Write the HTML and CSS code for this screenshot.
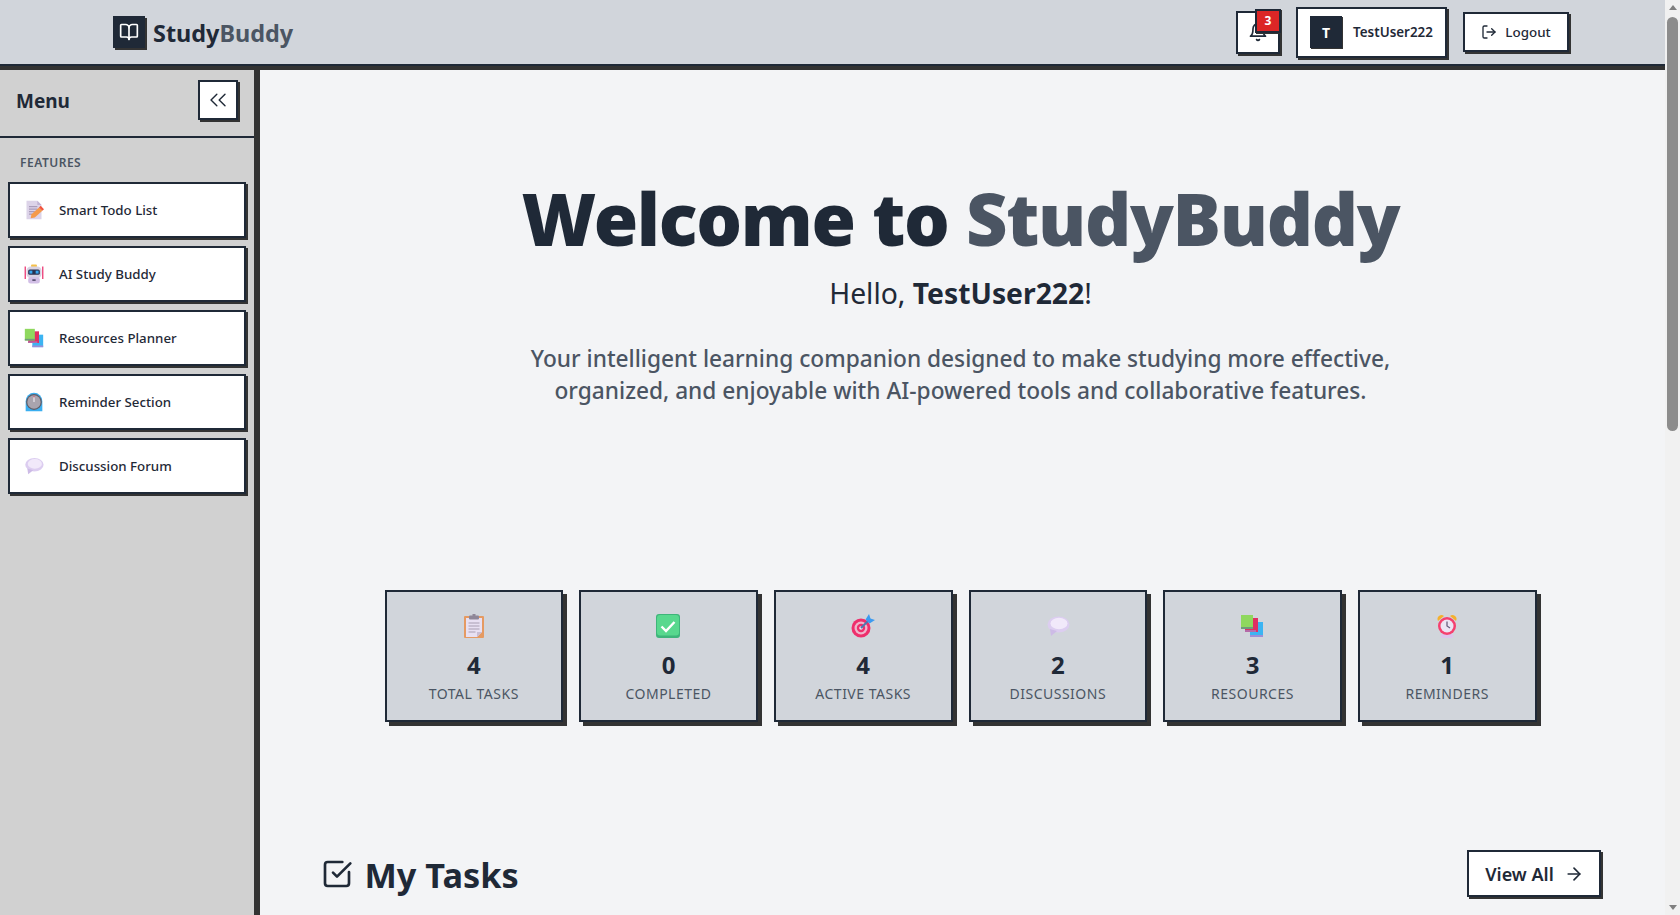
FILE: index.html
```html
<!DOCTYPE html>
<html lang="en">
  <head>
    <meta charset="UTF-8" />
    <meta name="viewport" content="width=device-width, initial-scale=1.0" />
    <title>StudyBuddy</title>
    <link rel="stylesheet" href="styles.css">
  </head>

  <body>
    <!-- emoji style pictures, reused in the sidebar and the stat cards -->
    <svg class="defs" width="0" height="0">
      <defs>
        <symbol id="e-memo" viewBox="0 0 24 24">
          <path d="M3 1h13l5 5v17H3z" fill="#dcd3e8"/>
          <path d="M16 1l5 5h-5z" fill="#bfb2d2"/>
          <path d="M6 8h10M6 11h10M6 14h7M6 17h4" stroke="#a99cba" stroke-width="1.4"/>
          <path d="M8 22l1-5 9-8 4 4-9 8z" fill="#f59a4a"/>
          <path d="M18 9l2-2 4 4-2 2z" fill="#f2543d"/>
        </symbol>
        <symbol id="e-robot" viewBox="0 0 24 24">
          <path d="M1.500 3v15M22.500 3v15" stroke="#ec3f78" stroke-width="1.6"/>
          <rect x="8.500" y="0.500" width="7" height="3.500" rx="1" fill="#f5c04a"/>
          <rect x="3" y="3" width="18" height="14" rx="5" fill="#d9d3e4"/>
          <rect x="5" y="6.500" width="14" height="6.500" rx="2" fill="#2b3350"/>
          <rect x="6.500" y="8" width="3.500" height="3.500" fill="#38a7f0"/>
          <rect x="14" y="8" width="3.500" height="3.500" fill="#38a7f0"/>
          <rect x="5" y="16" width="14" height="7.500" rx="3" fill="#d2bfe6"/>
          <rect x="10" y="18.500" width="4" height="1.600" fill="#3a3550"/>
        </symbol>
        <symbol id="e-books" viewBox="0 0 24 24">
          <rect x="10" y="8" width="13" height="15" fill="#3cb4f2"/>
          <rect x="10" y="21" width="13" height="2" fill="#9a8fd8"/>
          <rect x="5" y="4" width="13" height="14" fill="#e02f62"/>
          <rect x="5" y="16" width="11" height="2" fill="#b56aa8"/>
          <rect x="1" y="1" width="12" height="14" fill="#8fd85e"/>
          <rect x="1" y="13" width="12" height="2" fill="#6f9c7a"/>
        </symbol>
        <symbol id="e-clock" viewBox="0 0 24 24">
          <path d="M2 23V11a10 10 0 0 1 20 0v12z" fill="#3aaef0"/>
          <circle cx="12" cy="12" r="9.500" fill="#5f5d68"/>
          <circle cx="12" cy="12" r="8" fill="#a9a4ae"/>
          <path d="M12 6v6" stroke="#e9e6ee" stroke-width="1.500"/>
          <path d="M12 4.500v2" stroke="#e0526a" stroke-width="1.200"/>
        </symbol>
        <symbol id="e-speech" viewBox="0 0 24 24">
          <ellipse cx="12.500" cy="10.500" rx="11" ry="8" fill="#dccdf0"/>
          <ellipse cx="13" cy="9.500" rx="8.500" ry="5.800" fill="#f1e9fa"/>
          <path d="M4 15l1 7 6-5z" fill="#cdbbe6"/>
        </symbol>
        <symbol id="e-clipboard" viewBox="0 0 24 24">
          <rect x="2" y="2" width="20" height="22" rx="1" fill="#e59a62"/>
          <path d="M4 4h16v14l-5 5H4z" fill="#e8e0f2"/>
          <path d="M15 23l5-5h-5z" fill="#c9bdd4"/>
          <rect x="7" y="1.500" width="10" height="4" rx="1" fill="#8f8798"/>
          <rect x="10.500" y="0" width="3" height="2.500" fill="#8f8798"/>
          <path d="M6.500 9h11M6.500 12h11M6.500 15h11M6.500 18h7" stroke="#a89eb2" stroke-width="1.100"/>
        </symbol>
        <symbol id="e-check" viewBox="0 0 24 24">
          <rect x="0" y="0" width="24" height="24" rx="3" fill="#3eb57a"/>
          <rect x="1" y="1" width="22" height="20.500" rx="3" fill="#58d88e"/>
          <path d="M5.500 12.500l4.500 4.500 8.500-9" fill="none" stroke="#fff" stroke-width="2.400"/>
        </symbol>
        <symbol id="e-target" viewBox="0 0 24 24">
          <circle cx="10" cy="14" r="9.500" fill="#ee2f6c"/>
          <circle cx="10" cy="14" r="6.500" fill="#efb6cc"/>
          <circle cx="10" cy="14" r="4.200" fill="#ee2f6c"/>
          <circle cx="10" cy="14" r="1.800" fill="#efe6f6"/>
          <path d="M10 14l8-8" stroke="#4a7ab0" stroke-width="2"/>
          <path d="M14.500 5.500L18 0l1.500 4.500L24 6l-5.500 3.500z" fill="#3d9bf0"/>
        </symbol>
        <symbol id="e-alarm" viewBox="0 0 24 24">
          <path d="M3 7a4 4 0 0 1 6-5zM21 7a4 4 0 0 0-6-5z" fill="#f5b02e"/>
          <rect x="6" y="20" width="12" height="4" rx="1" fill="#dcc4ec"/>
          <circle cx="12" cy="12" r="9" fill="#f5406f"/>
          <circle cx="12" cy="12" r="6.500" fill="#ece4f4"/>
          <path d="M12 7.500V12l3 2" fill="none" stroke="#6a5f80" stroke-width="1.300"/>
        </symbol>
      </defs>
    </svg>

    <div class="page">
      <div class="app">
        <header class="topbar">
          <div class="brand">
            <span class="brand-mark">
              <svg class="stroke-icon" width="20" height="20" viewBox="0 0 24 24">
                <path d="M12 7v14"/>
                <path d="M3 18a1 1 0 0 1-1-1V4a1 1 0 0 1 1-1h5a4 4 0 0 1 4 4 4 4 0 0 1 4-4h5a1 1 0 0 1 1 1v13a1 1 0 0 1-1 1h-6a3 3 0 0 0-3 3 3 3 0 0 0-3-3z"/>
              </svg>
            </span>
            <span class="brand-name">Study<span class="muted">Buddy</span></span>
          </div>

          <div class="topbar-actions">
            <button class="btn bell">
              <svg class="stroke-icon" width="20" height="20" viewBox="0 0 24 24">
                <path d="M6 8a6 6 0 0 1 12 0c0 7 3 9 3 9H3s3-2 3-9"/>
                <path d="M10.300 21a1.940 1.940 0 0 0 3.400 0"/>
              </svg>
              <span class="badge">3</span>
            </button>
            <button class="btn user">
              <span class="avatar">T</span>
              <span class="user-name">TestUser222</span>
            </button>
            <button class="btn logout">
              <svg class="stroke-icon" width="16" height="16" viewBox="0 0 24 24">
                <path d="M9 21H5a2 2 0 0 1-2-2V5a2 2 0 0 1 2-2h4"/>
                <path d="M16 17l5-5-5-5"/>
                <path d="M21 12H9"/>
              </svg>
              Logout
            </button>
          </div>
        </header>

        <div class="body-row">
          <aside class="sidebar">
            <div class="sidebar-head">
              <h2>Menu</h2>
              <button class="btn collapse">
                <svg class="stroke-icon" width="28" height="28" viewBox="0 0 24 24">
                  <path d="M11 17l-5-5 5-5"/>
                  <path d="M18 17l-5-5 5-5"/>
                </svg>
              </button>
            </div>
            <p class="nav-title">FEATURES</p>
            <nav class="nav">
              <a class="nav-item"><svg class="emoji"><use href="#e-memo"/></svg>Smart Todo List</a>
              <a class="nav-item"><svg class="emoji"><use href="#e-robot"/></svg>AI Study Buddy</a>
              <a class="nav-item"><svg class="emoji"><use href="#e-books"/></svg>Resources Planner</a>
              <a class="nav-item"><svg class="emoji"><use href="#e-clock"/></svg>Reminder Section</a>
              <a class="nav-item"><svg class="emoji"><use href="#e-speech"/></svg>Discussion Forum</a>
            </nav>
          </aside>

          <main class="content">
            <section class="hero">
              <h1>Welcome to <span class="muted">StudyBuddy</span></h1>
              <p class="hello">Hello, <b>TestUser222</b>!</p>
              <p class="intro">Your intelligent learning companion designed to make studying more effective, organized, and enjoyable with AI-powered tools and collaborative features.</p>
            </section>

            <section class="stats">
              <div class="stat"><svg class="stat-icon"><use href="#e-clipboard"/></svg><b>4</b><span>Total Tasks</span></div>
              <div class="stat"><svg class="stat-icon"><use href="#e-check"/></svg><b>0</b><span>Completed</span></div>
              <div class="stat"><svg class="stat-icon"><use href="#e-target"/></svg><b>4</b><span>Active Tasks</span></div>
              <div class="stat"><svg class="stat-icon"><use href="#e-speech"/></svg><b>2</b><span>Discussions</span></div>
              <div class="stat"><svg class="stat-icon"><use href="#e-books"/></svg><b>3</b><span>Resources</span></div>
              <div class="stat"><svg class="stat-icon"><use href="#e-alarm"/></svg><b>1</b><span>Reminders</span></div>
            </section>

            <section class="tasks-head">
              <h2>
                <svg class="stroke-icon" width="32" height="32" viewBox="0 0 24 24">
                  <path d="M21 10.500V19a2 2 0 0 1-2 2H5a2 2 0 0 1-2-2V5a2 2 0 0 1 2-2h11"/>
                  <path d="M9 11l3 3L22 4"/>
                </svg>
                <span class="tasks-title">My Tasks</span>
              </h2>
              <button class="btn view-all">
                View All
                <svg class="stroke-icon" width="20" height="20" viewBox="0 0 24 24">
                  <path d="M5 12h14"/>
                  <path d="M12 5l7 7-7 7"/>
                </svg>
              </button>
            </section>
          </main>
        </div>
      </div>

      <div class="scrollbar">
        <span class="arrow up"></span>
        <span class="track"><span class="thumb"></span></span>
        <span class="arrow down"></span>
      </div>
    </div>
  </body>
</html>
```

FILE: styles.css
```css
* {
  box-sizing: border-box;
}

html, body {
  margin: 0;
  height: 100%;
  overflow: hidden;
}

body {
  font-family: "Noto Sans", "Open Sans", sans-serif;
  color: #1f2937;
  background-color: #f3f4f6;
}

h1, h2, p {
  margin: 0;
}

.defs {
  display: block;
  position: absolute;
}

.muted {
  color: #4b5563;
}

.stroke-icon {
  fill: none;
  stroke: currentColor;
  stroke-width: 2;
  stroke-linecap: round;
  stroke-linejoin: round;
  flex: none;
}

.page {
  display: flex;
  height: 915px;
}

.app {
  flex: 1;
  min-width: 0;
  display: flex;
  flex-direction: column;
}

/* buttons all share the hard offset shadow */
.btn {
  display: flex;
  align-items: center;
  justify-content: center;
  font-family: inherit;
  color: #1f2937;
  background-color: #fff;
  border: 2px solid #1f2937;
  box-shadow: 2px 2px 0 #333;
  padding: 0;
}

/* top bar */
.topbar {
  height: 70px;
  flex: none;
  display: flex;
  align-items: center;
  justify-content: space-between;
  padding: 0 96px 6px 113px;
  background-color: #d1d5db;
  box-shadow: inset 0 -4px 0 #333, inset 0 -6px 0 #1f2937;
}

.brand {
  display: flex;
  align-items: center;
  gap: 8px;
}

.brand-mark {
  width: 32px;
  height: 32px;
  display: flex;
  align-items: center;
  justify-content: center;
  color: #fff;
  background-color: #1f2937;
  box-shadow: 2px 2px 0 #333;
}

.brand-name {
  margin-top: 2px;
  font-size: 23.4px;
  font-weight: 700;
}

.topbar-actions {
  display: flex;
  align-items: center;
  gap: 16px;
}

.bell {
  width: 44px;
  height: 43px;
  position: relative;
}

.badge {
  position: absolute;
  top: -4px;
  right: -3px;
  width: 26px;
  height: 24px;
  display: flex;
  align-items: center;
  justify-content: center;
  font-size: 12px;
  font-weight: 700;
  color: #fff;
  background-color: #dc2626;
  border: 2px solid #1f2937;
  box-shadow: 1px 1px 0 #333;
}

.user {
  width: 151px;
  height: 51px;
  gap: 11px;
}

.avatar {
  width: 32px;
  height: 32px;
  display: flex;
  align-items: center;
  justify-content: center;
  font-size: 14px;
  font-weight: 700;
  color: #fff;
  background-color: #1f2937;
  box-shadow: 1px 1px 0 #333;
}

.user-name {
  font-size: 13.4px;
  font-weight: 600;
}

.logout {
  width: 106px;
  height: 40px;
  gap: 8px;
  font-size: 13.4px;
  font-weight: 500;
}

.body-row {
  flex: 1;
  min-height: 0;
  display: flex;
}

/* sidebar */
.sidebar {
  width: 260px;
  flex: none;
  background-color: #d1d1d1;
  border-right: 6px solid #333;
}

.sidebar-head {
  height: 68px;
  display: flex;
  align-items: center;
  justify-content: space-between;
  padding: 0 16px 6px;
  border-bottom: 2px solid #1f2937;
}

.sidebar-head h2 {
  margin-top: 2px;
  font-size: 19px;
  line-height: 26px;
  font-weight: 700;
}

.collapse {
  width: 40px;
  height: 40px;
}

.collapse .stroke-icon {
  stroke-width: 1.2;
}

.nav-title {
  padding: 17px 20px 11px;
  font-size: 12px;
  line-height: 16px;
  font-weight: 600;
  letter-spacing: 0.5px;
  color: #4b5563;
}

.nav {
  display: flex;
  flex-direction: column;
  gap: 8px;
  padding: 0 8px;
}

.nav-item {
  height: 56px;
  display: flex;
  align-items: center;
  gap: 15px;
  padding-left: 14px;
  font-size: 13.3px;
  font-weight: 500;
  background-color: #fff;
  border: 2px solid #1f2937;
  box-shadow: 2px 2px 0 #333;
}

.emoji {
  width: 20px;
  height: 20px;
  flex: none;
}

/* main column */
.content {
  flex: 1;
  min-width: 0;
  display: flex;
  flex-direction: column;
  align-items: center;
  padding-right: 4px;
  background-color: #f3f4f6;
}

.hero {
  padding-top: 108px;
  text-align: center;
}

.hero h1 {
  font-size: 72px;
  line-height: 80px;
  font-weight: 900;
  letter-spacing: -1.3px;
}

.hello {
  margin-top: 17px;
  font-size: 28.3px;
  line-height: 36px;
}

.hello b {
  font-weight: 700;
}

.intro {
  width: 900px;
  margin-top: 32px;
  font-size: 22.7px;
  line-height: 32px;
  font-weight: 500;
  color: #4b5563;
}

.stats {
  width: 1152px;
  margin-top: 183px;
  display: grid;
  grid-template-columns: repeat(6, 1fr);
  gap: 16px;
}

.stat {
  height: 132px;
  padding-top: 22px;
  display: flex;
  flex-direction: column;
  align-items: center;
  background-color: #d1d5db;
  border: 2px solid #1f2937;
  box-shadow: 4px 4px 0 #333;
}

.stat-icon {
  width: 24px;
  height: 24px;
}

.stat b {
  margin-top: 11px;
  font-size: 24px;
  line-height: 32px;
  font-weight: 700;
}

.stat span {
  margin-top: 3px;
  font-size: 14px;
  line-height: 20px;
  letter-spacing: 0.5px;
  text-transform: uppercase;
  color: #4b5563;
}

.tasks-head {
  width: 1280px;
  margin-top: 128px;
  display: flex;
  align-items: center;
  justify-content: space-between;
}

.tasks-head h2 {
  display: flex;
  align-items: center;
  gap: 12px;
  font-size: 34.3px;
  line-height: 40px;
  font-weight: 700;
}

.tasks-title {
  margin-top: 2px;
}

.view-all {
  width: 134px;
  height: 47px;
  gap: 10px;
  padding-left: 2px;
  font-size: 18px;
  font-weight: 600;
}

/* drawn scrollbar, the screenshot has one */
.scrollbar {
  width: 15px;
  flex: none;
  display: flex;
  flex-direction: column;
  align-items: center;
  background-color: #f1f1f1;
}

.arrow {
  flex: none;
  width: 0;
  height: 0;
  margin: 5px 0;
  border-left: 4px solid transparent;
  border-right: 4px solid transparent;
}

.arrow.up {
  border-bottom: 5px solid #7f7f7f;
}

.arrow.down {
  border-top: 5px solid #7f7f7f;
}

.track {
  flex: 1;
  width: 100%;
  display: flex;
  justify-content: center;
}

.thumb {
  width: 11px;
  height: 414px;
  margin-top: 2px;
  border-radius: 6px;
  background-color: #8c8c8c;
}
```
